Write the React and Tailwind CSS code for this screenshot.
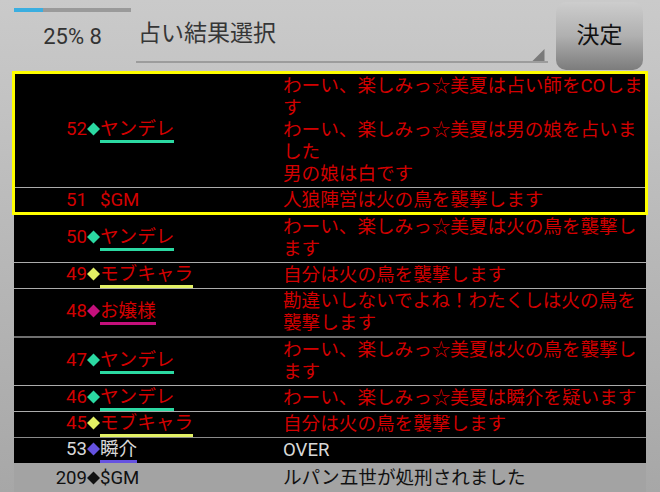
import React from "react";

const FONT = { fontFamily: 'Roboto, "Noto Sans CJK JP", sans-serif' };

const YAN = "#2bd9a2";
const MOB = "#e2f064";
const OJO = "#c4107c";
const SHUN = "#6552e0";

function Diamond({ color }) {
  return (
    <svg width="13" height="22" viewBox="0 0 13 22" className="shrink-0">
      {color ? <polygon points="6.5,4.5 13,11 6.5,17.5 0,11" fill={color} /> : null}
    </svg>
  );
}

function Row({ num, dia, name, under, lines, text, numW, sep, pad, bg }) {
  return (
    <div className={`flex ${bg || ""} ${sep || "border-b border-[#ababab]"}`}>
      <div className={`flex items-center shrink-0 ${numW === 72 ? "w-[268px]" : "w-[269px]"}`}>
        <div className="flex items-start">
          <div className={`${numW === 72 ? "w-[72px]" : "w-[73px]"} text-right leading-[22px]`} style={{ color: text }}>
            {num}
          </div>
          <Diamond color={dia} />
          <div className="flex flex-col items-start">
            <div
              className={`leading-[22px] whitespace-nowrap ${under ? "border-b-[3px]" : ""}`}
              style={{ color: text, borderColor: under }}
            >
              {name}
            </div>
          </div>
        </div>
      </div>
      <div className={`flex-1 min-w-0 overflow-hidden whitespace-nowrap ${pad || "pt-[1px] pb-[2px]"}`} style={{ color: text }}>
        {lines.map((l, i) => (
          <div key={i} className="leading-[22px]">{l}</div>
        ))}
      </div>
    </div>
  );
}

export default function App() {
  const RED = "#d20000";
  const LG = "#d8d8d8";
  return (
    <div
      className="w-[660px] h-[492px] overflow-hidden bg-gradient-to-b from-[#cacaca] to-[#a7a7a7] text-[18.6px]"
      style={FONT}
    >
      {/* header */}
      <div className="flex h-[71px] pl-[14px]">
        <div className="w-[117px] flex flex-col items-center pt-[8px]">
          <div className="w-full h-[4px] bg-[#9a9a9a] flex">
            <div className="w-[29px] h-full bg-[#3aaee0]" />
          </div>
          <div className="mt-[12px] text-[22px] leading-[26px] text-[#333333]">25% 8</div>
        </div>
        <div className="ml-[5px] w-[412px] h-[63px] flex flex-col border-b-2 border-[#9c9c9c]">
          <div className="pt-[19px] pl-[2px] text-[23px] leading-[30px] text-[#363636]">占い結果選択</div>
          <svg width="17" height="17" viewBox="0 0 17 17" className="mt-auto self-end mr-[1px]">
            <polygon points="17,0 17,17 0,17" fill="#7a7a7a" />
          </svg>
        </div>
        <div className="ml-[8px] mt-[2px] w-[87px] h-[68px] rounded-[10px] bg-gradient-to-b from-[#cdcdcd] via-[#b0b0b0] to-[#7c7c7c] flex items-center justify-center">
          <span className="text-[23px] leading-[30px] text-[#111111]">決定</span>
        </div>
      </div>

      {/* list */}
      <div className="px-[14px]">
        <div className="bg-black">
          <div className="-mx-[2px] border-[3px] border-[#ffff00] bg-black">
            <Row
              numW={72}
              num="52"
              dia={YAN}
              name="ヤンデレ"
              under={YAN}
              text={RED}
              lines={[
                "わーい、楽しみっ☆美夏は占い師をCOしま",
                "す",
                "わーい、楽しみっ☆美夏は男の娘を占いま",
                "した",
                "男の娘は白です",
              ]}
            />
            <Row numW={72} num="51" name="$GM" text={RED} sep="border-b-0" pad="pt-[1px] pb-[1px]" lines={["人狼陣営は火の鳥を襲撃します"]} />
          </div>
          <Row num="50" dia={YAN} name="ヤンデレ" under={YAN} text={RED} lines={["わーい、楽しみっ☆美夏は火の鳥を襲撃し", "ます"]} />
          <Row num="49" dia={MOB} name="モブキャラ" under={MOB} text={RED} lines={["自分は火の鳥を襲撃します"]} />
          <Row num="48" dia={OJO} name="お嬢様" under={OJO} text={RED} sep="border-b-2 border-[#6f6f6f]" lines={["勘違いしないでよね！わたくしは火の鳥を", "襲撃します"]} />
          <Row num="47" dia={YAN} name="ヤンデレ" under={YAN} text={RED} lines={["わーい、楽しみっ☆美夏は火の鳥を襲撃し", "ます"]} />
          <Row num="46" dia={YAN} name="ヤンデレ" under={YAN} text={RED} lines={["わーい、楽しみっ☆美夏は瞬介を疑います"]} />
          <Row num="45" dia={MOB} name="モブキャラ" under={MOB} text={RED} sep="border-b border-[#8a8a8a]" lines={["自分は火の鳥を襲撃します"]} />
          <Row num="53" dia={SHUN} name="瞬介" under={SHUN} text={LG} sep="border-b-0" lines={["OVER"]} />
        </div>
        <Row num="209" dia="#111111" name="$GM" text="#111111" bg="bg-[#a3a3a3]" sep="border-b-0" pad="pt-[4px] pb-[3px]" lines={["ルパン五世が処刑されました"]} />
      </div>
    </div>
  );
}
